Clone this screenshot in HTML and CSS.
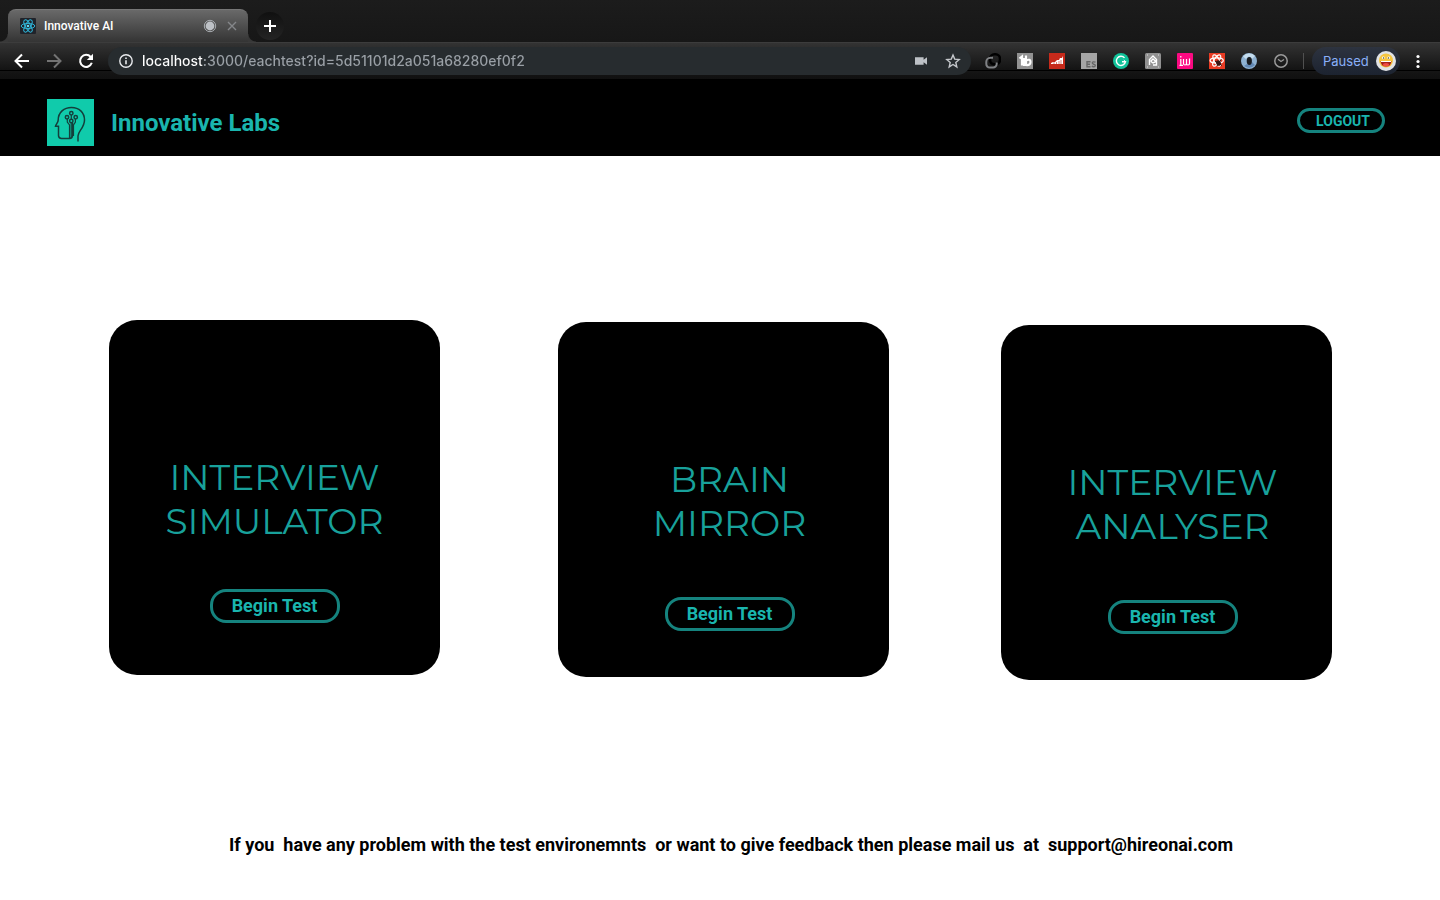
FILE: index.html
```html
<!DOCTYPE html>
<html lang="en">
<head>
<meta charset="utf-8">
<title>Innovative AI</title>
<link rel="stylesheet" href="styles.css">
</head>
<body>
<div class="browser">
  <div class="tab-strip">
    <div class="tab">
      <svg class="icon" viewBox="0 0 16 16" aria-hidden="true"><rect width="16" height="16" rx="1" fill="#20232a"/><g fill="none" stroke="#2fb5d8" stroke-width="1"><ellipse cx="8" cy="8" rx="6.8" ry="2.6"/><ellipse cx="8" cy="8" rx="6.8" ry="2.6" transform="rotate(60 8 8)"/><ellipse cx="8" cy="8" rx="6.8" ry="2.6" transform="rotate(120 8 8)"/></g><circle cx="8" cy="8" r="1.3" fill="#5fd8f5"/></svg>
      <span class="tab-title">Innovative AI</span>
      <svg class="icon" viewBox="0 0 16 16" aria-hidden="true"><circle cx="8" cy="8" r="4.4" fill="#bdc1c6"/><circle cx="8" cy="8" r="5.7" fill="none" stroke="#a9adb2" stroke-width="1"/></svg>
      <button class="icon-button" aria-label="Close tab"><svg class="icon" viewBox="0 0 16 16"><path d="M4 4l8 8M12 4l-8 8" stroke="#85878a" stroke-width="1.4" fill="none"/></svg></button>
    </div>
    <button class="new-tab" aria-label="New tab"><svg viewBox="0 0 28 28"><path d="M14 8v12M8 14h12" stroke="#fff" stroke-width="2" fill="none"/></svg></button>
  </div>
  <div class="toolbar">
    <div class="nav-buttons">
      <button class="icon-button" aria-label="Back"><svg class="icon" viewBox="0 0 16 16"><path d="M15 8H2M8 1.5L1.5 8L8 14.5" fill="none" stroke="#fff" stroke-width="2"/></svg></button>
      <button class="icon-button" aria-label="Forward"><svg class="icon" viewBox="0 0 16 16"><path d="M1 8H14M8 1.5L14.5 8L8 14.5" fill="none" stroke="#737373" stroke-width="2"/></svg></button>
      <button class="icon-button" aria-label="Reload"><svg class="icon" viewBox="0 0 16 16"><path d="M12.7 4A6 6 0 1 0 13.8 9.8" fill="none" stroke="#fff" stroke-width="2"/><path d="M15 .8V7H8.8z" fill="#fff"/></svg></button>
    </div>
    <div class="address-bar">
      <svg class="icon" viewBox="0 0 16 16" aria-hidden="true"><circle cx="8" cy="8" r="6.2" fill="none" stroke="#e8eaed" stroke-width="1.4"/><path d="M8 7.2v4M8 4.4V6" stroke="#e8eaed" stroke-width="1.6"/></svg>
      <input class="address" aria-label="Address" value="localhost:3000/eachtest?id=5d51101d2a051a68280ef0f2">
      <button class="icon-button" aria-label="Camera"><svg class="icon" viewBox="0 0 16 16"><path d="M2 4.2h8.6v2.6L14 4.2v7.6l-3.4-2.6v2.6H2z" fill="#bdc1c6"/></svg></button>
      <button class="icon-button" aria-label="Bookmark this page"><svg class="icon" viewBox="0 0 16 16"><path d="M8 2l1.7 4.1 4.5.4-3.4 3 1 4.4L8 11.5l-3.8 2.4 1-4.4-3.4-3 4.5-.4z" fill="none" stroke="#c5c8cc" stroke-width="1.4"/></svg></button>
    </div>
    <div class="extensions">
      <svg class="icon" viewBox="0 0 16 16"><rect x="5" y="1.3" width="10" height="10" rx="4.5" fill="none" stroke="#000" stroke-width="2.6"/><path d="M8 4.8H5.500A4.200 4.200 0 0 0 1.300 9v1.600A3.600 3.600 0 0 0 5 14.600h3a3.600 3.600 0 0 0 3.700-3.600V9.500" fill="none" stroke="#808285" stroke-width="2"/></svg>
      <svg class="icon" viewBox="0 0 16 16"><rect width="16" height="16" fill="#929292"/><path d="M2.500 5.500L5 3.500V12.500M9 2.500V12M9 7.500q4.500-2 4.500 1.500T9 12H7V5" fill="none" stroke="#fff" stroke-width="2.200"/></svg>
      <svg class="icon" viewBox="0 0 16 16"><rect width="16" height="16" fill="#c62a1b"/><path d="M2 10l2-1 2 0 2-2 2 0 1-2 2 0 1-2v8H2z" fill="#fff"/><path d="M5 12V9M7.500 12V9M10 11V8M12 11V7" stroke="#c62a1b" stroke-width=".6"/></svg>
      <svg class="icon" viewBox="0 0 16 16"><rect width="16" height="16" fill="#a5a5a5"/><path d="M9.500 8.700H6v5h3.500M6 11.200h3M14.500 9.200q-3.200-1-3.200.9c0 1.500 3 .7 3 2.300s-2.200 1.600-3.500.7" fill="none" stroke="#666" stroke-width="1.400"/></svg>
      <svg class="icon" viewBox="0 0 16 16"><circle cx="8" cy="8" r="8" fill="#11c39a"/><path d="M11.500 4.900A4.600 4.600 0 1 0 12.500 8.700H9" fill="none" stroke="#fff" stroke-width="1.400"/><path d="M10.800 7l1.800 1.700" fill="none" stroke="#fff"/></svg>
      <svg class="icon" viewBox="0 0 16 16"><rect width="16" height="16" rx="1.500" fill="#919191"/><path d="M4.500 12V6.500L8 3l3.500 3.500V12H8M5.500 8.500L8 6l3 2.500L8 10L6 8.500" fill="none" stroke="#fff" stroke-width="1.400"/><path d="M2 2h1M13 2h1M2 14h1M13 14h1" stroke="#ddd"/></svg>
      <svg class="icon" viewBox="0 0 16 16"><rect width="16" height="16" rx="1" fill="#fb0a82"/><path d="M3.800 6v6.300M3.800 3v1.400M6.500 6v4.500q0 1.500 1.500 1.500t1.500-1.500V6M9.500 10.500q0 1.500 1.500 1.500t1.500-1.500V5.500M2.500 12.300H6" fill="none" stroke="#fff" stroke-width="1.200"/></svg>
      <svg class="icon" viewBox="0 0 16 16"><rect width="16" height="16" fill="#e93b23"/><g fill="none" stroke="#fff" stroke-width="1.200"><ellipse cx="7.700" cy="7.500" rx="6.600" ry="2.600"/><ellipse cx="7.700" cy="7.500" rx="6.300" ry="2.600" transform="rotate(60 7.700 7.500)"/><ellipse cx="7.700" cy="7.500" rx="6.300" ry="2.600" transform="rotate(120 7.700 7.500)"/></g><ellipse cx="9.500" cy="10" rx="2.300" ry="2.800" fill="#3a1715" transform="rotate(-30 9.500 10)"/><path d="M6 8l7 4.500M12 6.500L8 13" stroke="#3a1715"/></svg>
      <svg class="icon" viewBox="0 0 16 16"><circle cx="8" cy="8" r="8" fill="#8fb2d2"/><path d="M2 3.500A8 8 0 0 1 14 3L11 6Q8 1 5 6z" fill="#c4dced"/><path d="M3 13Q9 17 14 12L11 9Q9 13 6 11z" fill="#6288b4"/><ellipse cx="8.300" cy="8" rx="2.600" ry="4" fill="#191c20"/></svg>
      <svg class="icon" viewBox="0 0 16 16"><circle cx="8" cy="8" r="6.200" fill="none" stroke="#999" stroke-width="1.500"/><path d="M5 6.200l3 2.300 3-2" fill="none" stroke="#999" stroke-width="1.300"/></svg>
    </div>
    <button class="profile">Paused
      <svg viewBox="0 0 20 20" aria-hidden="true"><circle cx="10" cy="10" r="10" fill="#e1e3e6"/><circle cx="10" cy="9.500" r="7" fill="#f6c640"/><path d="M4.500 10h11Q15 15.500 10 15.500T4.500 10z" fill="#a3201a"/><path d="M5 10h10v1H5z" fill="#fff"/><ellipse cx="10" cy="13.700" rx="3" ry="1.600" fill="#ef4e43"/><circle cx="7.300" cy="6.800" r="1.400" fill="#fff"/><circle cx="12.700" cy="6.800" r="1.400" fill="#fff"/><circle cx="7.500" cy="7" r=".7" fill="#443"/><circle cx="12.500" cy="7" r=".7" fill="#443"/></svg>
    </button>
    <button class="icon-button" aria-label="Menu"><svg class="icon" viewBox="0 0 16 16"><g fill="#fff"><circle cx="8" cy="3.500" r="1.600"/><circle cx="8" cy="8.500" r="1.600"/><circle cx="8" cy="13.500" r="1.600"/></g></svg></button>
  </div>
</div>
<header class="site-header">
  <svg class="logo" viewBox="0 0 47 47" aria-hidden="true"><rect width="47" height="47" fill="#10cbab"/><g fill="none" stroke="#13403c" stroke-width="1.500"><path d="M31 42.500V37C31 32 37.500 29 37.500 21C37.500 13.500 32 8.400 24.500 8.400C17 8.400 11.200 13.500 11.200 21C11.200 23.500 8.800 25.500 8.500 27.300H11.500V36.500Q11.500 39.400 14.500 39.400H22.500Q25.500 39.400 25.500 36.500V24"/><circle cx="20" cy="18.300" r="1.700"/><circle cx="24.300" cy="14.200" r="1.700"/><circle cx="28.700" cy="18.300" r="1.700"/><circle cx="24.300" cy="22" r="1.700"/><path d="M20.300 20V23L22.500 26V39M28.400 20V23L26.500 26V37M24.300 16V20M24.200 24V39" stroke-width="1.200"/></g></svg>
  <h1 class="brand">Innovative Labs</h1>
  <button class="logout">LOGOUT</button>
</header>
<main class="page">
  <section class="cards">
    <article class="card card-simulator">
      <h2 class="card-title">INTERVIEW<br>SIMULATOR</h2>
      <button class="begin">Begin Test</button>
    </article>
    <article class="card card-shifted card-mirror">
      <h2 class="card-title">BRAIN<br>MIRROR</h2>
      <button class="begin">Begin Test</button>
    </article>
    <article class="card card-shifted card-analyser">
      <h2 class="card-title">INTERVIEW<br>ANALYSER</h2>
      <button class="begin">Begin Test</button>
    </article>
  </section>
  <p class="support">If you  have any problem with the test environemnts  or want to give feedback then please mail us  at  support@hireonai.com</p>
</main>
</body>
</html>
```

FILE: styles.css
```css
* {
  box-sizing: border-box;
}

body {
  margin: 0;
  background: #fff;
  color: #000;
  font-family: Roboto, "Liberation Sans", sans-serif;
}

button {
  border: 0;
  padding: 0;
  background: none;
  font-family: inherit;
}

svg {
  display: block;
  flex: none;
}

.icon {
  width: 16px;
  height: 16px;
}

/* Browser frame */
.browser {
  background: #101010;
}

.tab-strip {
  display: flex;
  align-items: flex-end;
  gap: 8px;
  height: 42px;
  padding-left: 8px;
  background: linear-gradient(#1c1c1c, #171717);
}

.tab {
  position: relative;
  display: flex;
  align-items: center;
  gap: 8px;
  width: 240px;
  height: 33px;
  padding: 0 8px 0 12px;
  border-top: 1px solid #777;
  border-radius: 8px 8px 0 0;
  background: linear-gradient(#696969, #343434);
}

/* Flared feet where the tab meets the toolbar */
.tab::before,
.tab::after {
  content: "";
  position: absolute;
  bottom: 0;
  width: 8px;
  height: 8px;
}

.tab::before {
  right: 100%;
  background: radial-gradient(circle at 0 0, transparent 7px, #383838 8px);
}

.tab::after {
  left: 100%;
  background: radial-gradient(circle at 100% 0, transparent 7px, #383838 8px);
}

.tab-title {
  flex: 1;
  color: #fff;
  font-size: 12px;
  font-weight: 500;
  line-height: 16px;
}

.tab .icon-button {
  margin-left: -2px;
}

.new-tab {
  width: 28px;
  height: 28px;
  margin-bottom: 2px;
  border-radius: 50%;
  background: linear-gradient(#101010, #242424);
}

.toolbar {
  display: flex;
  align-items: center;
  height: 37px;
  padding: 0 14px;
  border-top: 1px solid #3c3c3c;
  background: linear-gradient(#333, #131313 27px, #000 27px, #000 28px, #151515 28px, #101010);
}

.nav-buttons {
  display: flex;
  gap: 16px;
  margin-right: 14px;
}

.address-bar {
  display: flex;
  flex: 1;
  align-items: center;
  height: 28px;
  padding: 0 10px;
  border-radius: 14px;
  background: #272c2f;
}

/* The host part of the address is brighter than the path. */
.address {
  flex: 1;
  min-width: 0;
  margin: 0 8px;
  padding: 0;
  border: 0;
  outline: 0;
  color: #9aa0a6;
  font-family: Inter, sans-serif;
  font-size: 14px;
  font-weight: 500;
  line-height: 20px;
  background: linear-gradient(90deg, #fff 61px, #9aa0a6 61px);
  -webkit-background-clip: text;
  background-clip: text;
  -webkit-text-fill-color: transparent;
}

.address-bar .icon-button + .icon-button {
  margin-left: 16px;
}

.extensions {
  display: flex;
  gap: 16px;
  padding: 0 14px;
  border-right: 1px solid #505050;
}

.profile {
  display: flex;
  align-items: center;
  justify-content: space-between;
  width: 88px;
  height: 28px;
  margin: 0 10px 0 8px;
  padding: 0 4px 0 11px;
  border-radius: 14px;
  background: linear-gradient(#2d333f, #1c2330);
  color: #8ab0fa;
  font-family: Inter, sans-serif;
  font-size: 13px;
  font-weight: 400;
}

.profile svg {
  width: 20px;
  height: 20px;
}

/* Site header */
.site-header {
  display: flex;
  align-items: center;
  padding: 20px 55px 10px 47px;
  background: #000;
}

.logo {
  width: 47px;
  height: 47px;
}

.brand {
  flex: 1;
  margin: 0 0 0 17px;
  color: #1ab5ae;
  font-size: 24px;
  font-weight: 700;
  line-height: 28px;
}

.logout {
  height: 25px;
  margin-bottom: 4px;
  padding: 0 12px 0 16px;
  border: 3px solid #15837e;
  border-radius: 13px;
  color: #1ab5ae;
  font-size: 14px;
  font-weight: 700;
}

/* Test cards */
.page {
  padding-top: 164px;
}

.cards {
  display: grid;
  grid-template-columns: 109fr 331px 118fr 331px 112fr 331px 108fr;
  align-items: start;
}

.card {
  display: flex;
  flex-direction: column;
  align-items: center;
  gap: 46px;
  min-height: 355px;
  padding-top: 135px;
  border-radius: 28px;
  background: #000;
}

.card-shifted {
  gap: 52px;
  padding-left: 12px;
}

.card-simulator {
  grid-column: 2;
}

.card-mirror {
  grid-column: 4;
  margin-top: 2px;
}

.card-analyser {
  grid-column: 6;
  margin-top: 5px;
}

.card-title {
  margin: 0;
  color: #18a19b;
  font-family: Montserrat, Inter, sans-serif;
  font-size: 36px;
  font-weight: 400;
  line-height: 44px;
  text-align: center;
}

.begin {
  width: 130px;
  height: 34px;
  padding-bottom: 2px;
  border: 3px solid #15837e;
  border-radius: 16px;
  color: #1ab5ae;
  font-size: 18px;
  font-weight: 700;
}

.support {
  margin: 154px 0 0;
  padding-left: 22px;
  font-size: 18px;
  font-weight: 700;
  line-height: 22px;
  text-align: center;
  white-space: pre-wrap;
}
```
